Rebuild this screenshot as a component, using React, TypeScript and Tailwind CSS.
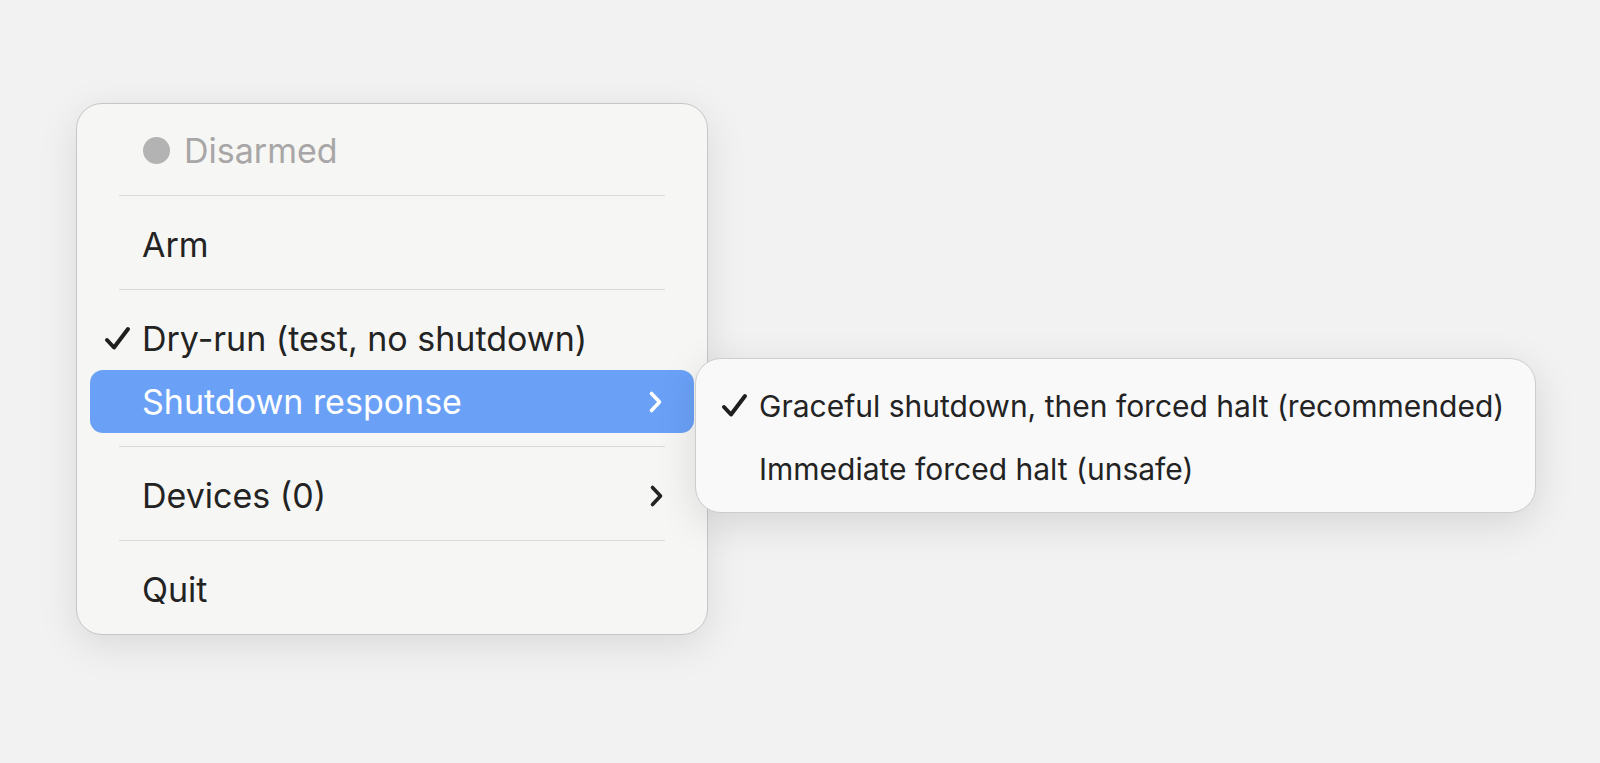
import React from "react";

const Check = () => (
    <svg width="27" height="25" viewBox="0 0 27 25" fill="none" className="shrink-0">
        <path d="M3 14 L10 21.5 L24 3" stroke="#1f1f1f" strokeWidth="4" strokeLinecap="round" strokeLinejoin="round" />
    </svg>
);

const Chevron = ({ color }: { color: string }) => (
    <svg width="15" height="24" viewBox="0 0 15 24" fill="none">
        <path d="M3.5 3.5 L11.5 12 L3.5 20.5" stroke={color} strokeWidth="3.6" strokeLinecap="round" strokeLinejoin="round" />
    </svg>
);

const Separator = () => (
    <div className="h-[31px] pt-[13px] px-[42px]">
        <div className="h-px bg-[#d9d9d7]" />
    </div>
);

export default function App() {
    return (
        <div
            className="min-h-screen bg-[#f2f2f2] pt-[103px] pl-[76px] text-[#232323] antialiased"
            style={{ fontFamily: "Inter, 'Noto Sans', sans-serif" }}
        >
            <div className="w-[632px] rounded-[26px] border border-[#c6c6c6] bg-[#f6f6f4] pt-[15px] pb-[13px] shadow-[0_10px_40px_rgba(0,0,0,0.10)] text-[34px] leading-none">
                <div className="h-[63px] flex items-center pl-[66px] gap-[14px] text-[#a8a6a6]">
                    <span className="w-[27px] h-[27px] rounded-full bg-[#b3b3b3]" />
                    <span>Disarmed</span>
                </div>
                <Separator />
                <div className="h-[63px] flex items-center pl-[65px]">Arm</div>
                <Separator />
                <div className="h-[63px] flex items-center pl-[27px] gap-[11px]">
                    <Check />
                    <span>Dry-run (test, no shutdown)</span>
                </div>
                <div className="relative mx-[13px]">
                    <div className="h-[63px] flex items-center justify-between pl-[52px] pr-[31px] rounded-[13px] bg-[#6aa1f7] text-white">
                        <span>Shutdown response</span>
                        <Chevron color="#ffffff" />
                    </div>
                    <div className="absolute left-[calc(100%+1px)] top-[-12px] w-[841px] rounded-[26px] border border-[#cdcdcd] bg-[#f9f9f9] pt-[15px] pb-[12px] shadow-[0_10px_40px_rgba(0,0,0,0.12)] text-[30px]">
                        <div className="h-[63px] flex items-center pl-[25px] gap-[11px]">
                            <Check />
                            <span>Graceful shutdown, then forced halt (recommended)</span>
                        </div>
                        <div className="h-[63px] flex items-center pl-[63px]">Immediate forced halt (unsafe)</div>
                    </div>
                </div>
                <Separator />
                <div className="h-[63px] flex items-center justify-between pl-[65px] pr-[43px]">
                    <span>Devices (0)</span>
                    <Chevron color="#232323" />
                </div>
                <Separator />
                <div className="h-[63px] flex items-center pl-[65px]">Quit</div>
            </div>
        </div>
    );
}
